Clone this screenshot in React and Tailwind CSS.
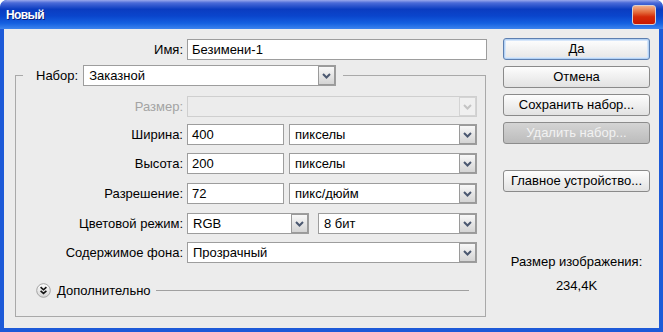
import React from "react";

const font = "font-['Liberation_Sans',Arial,sans-serif]";

function Chevron({ disabled }) {
  return (
    <svg width="9" height="6" viewBox="0 0 9 6">
      <path
        d="M1 1 L4.5 4.5 L8 1"
        fill="none"
        stroke={disabled ? "#c4c4c4" : "#4b5870"}
        strokeWidth="2"
      />
    </svg>
  );
}

function Select({ className, value, disabled }) {
  return (
    <div
      className={`flex h-[21px] flex-none items-center border ${
        disabled ? "border-[#cfcfcf] bg-[#ececec]" : "border-[#9d9d9d] bg-white"
      } ${className}`}
    >
      <span className="flex-1 truncate pl-[5px] text-[13px] leading-none text-black">{value}</span>
      <div
        className={`flex h-full w-[17px] flex-none items-center justify-center border ${
          disabled
            ? "border-[#d4d4d4] bg-[#f0f0f0]"
            : "border-[#9a9a9a] bg-gradient-to-b from-[#f8f8f8] to-[#d4d4d4]"
        }`}
      >
        <Chevron disabled={disabled} />
      </div>
    </div>
  );
}

function Input({ className, value }) {
  return (
    <div className={`flex h-[21px] flex-none items-center border border-[#9d9d9d] bg-white ${className}`}>
      <span className="pl-[4px] text-[13px] leading-none text-black">{value}</span>
    </div>
  );
}

function Label({ children, disabled }) {
  return (
    <span
      className={`w-[171px] flex-none pr-[4px] text-right text-[13px] leading-none ${
        disabled ? "text-[#a3a3a3]" : "text-black"
      }`}
    >
      {children}
    </span>
  );
}

function Button({ children, variant }) {
  if (variant === "default") {
    return (
      <div className="flex h-[22px] items-center justify-center rounded-[3px] border border-[#5d7fb0] bg-gradient-to-b from-[#ffffff] to-[#e6e6e6] shadow-[inset_0_0_0_1px_#b4d2f4,inset_0_0_0_2px_#d6e6fa] text-[13px] text-black">
        {children}
      </div>
    );
  }
  if (variant === "disabled") {
    return (
      <div className="flex h-[22px] items-center justify-center rounded-[3px] border border-[#8c8c8c] bg-gradient-to-b from-[#d4d4d4] to-[#bcbcbc] text-[13px] text-[#f2f2f2]">
        {children}
      </div>
    );
  }
  return (
    <div className="flex h-[22px] items-center justify-center rounded-[3px] border border-[#8a8a8a] bg-gradient-to-b from-[#fdfdfd] to-[#e2e2e2] text-[13px] text-black">
      {children}
    </div>
  );
}

export default function App() {
  return (
    <div className={`${font} h-[332px] w-[663px] overflow-hidden rounded-t-[7px] bg-[#1d5ad8]`}>
      {/* title bar */}
      <div className="flex h-[29px] items-center rounded-t-[7px] bg-[linear-gradient(to_bottom,#9aa8ec_0%,#4a6ad8_10%,#0b3cc0_32%,#0a45cc_55%,#1460e0_80%,#3c84ee_100%)] pl-[6px] pr-[7px]">
        <span className="text-[12px] font-bold tracking-[-0.6px] text-white [text-shadow:1px_1px_0_#0a1f7a]">
          Новый
        </span>
        <div className="ml-auto h-[20px] w-[24px] rounded-[3px] border border-[#d9cfd0] bg-[linear-gradient(to_bottom,#f3b08a_0%,#e36a3a_35%,#d42a08_60%,#c81800_100%)]" />
      </div>

      {/* body */}
      <div className="mx-[4px] flex h-[299px] bg-[#ececec]">
        {/* left column */}
        <div className="flex w-[490px] flex-none flex-col">
          <div className="mt-[10px] flex items-center">
            <span className="w-[183px] flex-none pr-[4px] text-right text-[13px] leading-none text-black">
              Имя:
            </span>
            <Input className="w-[300px]" value="Безимени-1" />
          </div>

          <fieldset className="ml-[11px] mt-[5px] box-border h-[252px] w-[471px] border border-[#a9a9a9]">
            <legend className="ml-[7px] flex items-center pl-[13px] pr-[7px]">
              <span className="mr-[5px] text-[13px] leading-none text-black">Набор:</span>
              <Select className="w-[253px]" value="Заказной" />
            </legend>

            <div className="mt-[10px] flex items-center">
              <Label disabled>Размер:</Label>
              <Select className="w-[290px]" value="" disabled />
            </div>

            <div className="mt-[7px] flex items-center">
              <Label>Ширина:</Label>
              <Input className="w-[97px]" value="400" />
              <Select className="ml-[5px] w-[188px]" value="пикселы" />
            </div>

            <div className="mt-[8px] flex items-center">
              <Label>Высота:</Label>
              <Input className="w-[97px]" value="200" />
              <Select className="ml-[5px] w-[188px]" value="пикселы" />
            </div>

            <div className="mt-[9px] flex items-center">
              <Label>Разрешение:</Label>
              <Input className="w-[97px]" value="72" />
              <Select className="ml-[5px] w-[188px]" value="пикс/дюйм" />
            </div>

            <div className="mt-[9px] flex items-center">
              <Label>Цветовой режим:</Label>
              <Select className="w-[122px]" value="RGB" />
              <Select className="ml-[9px] w-[159px]" value="8 бит" />
            </div>

            <div className="mt-[8px] flex items-center">
              <Label>Содержимое фона:</Label>
              <Select className="w-[290px]" value="Прозрачный" />
            </div>

            <div className="mt-[20px] flex items-center">
              <svg className="ml-[20px] flex-none" width="15" height="15" viewBox="0 0 15 15">
                <defs>
                  <linearGradient id="eg" x1="0" y1="0" x2="0" y2="1">
                    <stop offset="0" stopColor="#ffffff" />
                    <stop offset="1" stopColor="#d4d4d4" />
                  </linearGradient>
                </defs>
                <circle cx="7.5" cy="7.5" r="6.8" fill="url(#eg)" stroke="#a4a4a4" />
                <path d="M4.6 4.2 L7.5 6.8 L10.4 4.2" fill="none" stroke="#111" strokeWidth="1.6" />
                <path d="M4.6 7.8 L7.5 10.4 L10.4 7.8" fill="none" stroke="#111" strokeWidth="1.6" />
              </svg>
              <span className="ml-[6px] text-[13px] leading-none text-black">Дополнительно</span>
              <div className="ml-[5px] mr-[16px] h-px flex-1 bg-[#a0a0a0]" />
            </div>
          </fieldset>
        </div>

        {/* right column */}
        <div className="ml-[9px] flex w-[147px] flex-none flex-col">
          <div className="mt-[9px] flex flex-col gap-[6px]">
            <Button variant="default">Да</Button>
            <Button>Отмена</Button>
            <Button>Сохранить набор...</Button>
            <Button variant="disabled">Удалить набор...</Button>
          </div>
          <div className="mt-[26px]">
            <Button>Главное устройство...</Button>
          </div>
          <div className="mt-[62px] text-center text-[13px] leading-[16px] text-black">
            Размер изображения:
          </div>
          <div className="mt-[8px] text-center text-[13px] leading-[16px] text-black">234,4K</div>
        </div>
      </div>
    </div>
  );
}
